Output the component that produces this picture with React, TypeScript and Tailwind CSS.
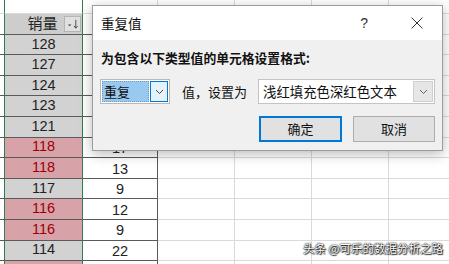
import React from "react";

const GREEN = "border-r-[#2f7d50]";

type R = { a: string; b: string; dup: boolean };
const rows: R[] = [
  { a: "128", b: "", dup: false },
  { a: "127", b: "", dup: false },
  { a: "124", b: "", dup: false },
  { a: "123", b: "", dup: false },
  { a: "121", b: "", dup: false },
  { a: "118", b: "17", dup: true },
  { a: "118", b: "13", dup: true },
  { a: "117", b: "9", dup: false },
  { a: "116", b: "12", dup: true },
  { a: "116", b: "9", dup: true },
  { a: "114", b: "22", dup: false },
  { a: "", b: "", dup: true },
];

function FilterIcon() {
  return (
    <svg width="16" height="16" viewBox="0 0 16 16">
      <path d="M3 8.5 L7 8.5 L5 10.5 Z" fill="#444" />
      <path d="M11.5 3.5 V12" stroke="#444" strokeWidth="1" />
      <path d="M9.5 10 L11.5 12.5 L13.5 10" stroke="#444" strokeWidth="1" fill="none" />
    </svg>
  );
}

function Chevron({ color = "#444" }: { color?: string }) {
  return (
    <svg width="9" height="6" viewBox="0 0 9 6">
      <path d="M1 1 L4.5 4.5 L8 1" stroke={color} strokeWidth="1" fill="none" />
    </svg>
  );
}

function Row({
  h,
  a,
  b,
  aBg,
  aText,
  header,
  dark,
}: {
  h: string;
  a?: React.ReactNode;
  b?: string;
  aBg: string;
  aText: string;
  header?: boolean;
  dark: boolean;
}) {
  const hb = dark ? "border-b-[#5a5a5a]" : "border-b-[#d9d9d9]";
  return (
    <div className={`flex ${h}`}>
      <div className={`w-[5px] shrink-0 border-r border-b ${GREEN} ${hb}`} />
      <div
        className={`relative w-[78px] shrink-0 border-r border-b ${GREEN} ${hb} ${aBg} ${aText} flex items-center justify-center`}
      >
        {a}
        {header && (
          <div className="absolute right-[1px] top-[2px] w-[17px] h-[16px] bg-[#e0e0e0] border border-[#b4b4b4] flex items-center justify-center">
            <FilterIcon />
          </div>
        )}
      </div>
      <div
        className={`w-[75px] shrink-0 border-r border-b ${dark ? "border-r-[#5a5a5a]" : "border-r-[#d9d9d9]"} ${hb} bg-white text-[#222] flex items-center justify-center pt-[3px]`}
      >
        {b}
      </div>
      <div className="w-[77px] shrink-0 border-r border-b border-[#dadada] bg-white" />
      <div className="w-[77px] shrink-0 border-r border-b border-[#dadada] bg-white" />
      <div className="w-[77px] shrink-0 border-r border-b border-[#dadada] bg-white" />
      <div className="flex-1 border-b border-[#dadada] bg-white" />
    </div>
  );
}

export default function App() {
  return (
    <div
      className="relative w-[449px] h-[264px] overflow-hidden bg-white text-[14.5px]"
      style={{ fontFamily: '"Liberation Sans", "Noto Sans CJK SC", sans-serif' }}
    >
      <div className="flex flex-col">
        <Row h="h-[14px]" aBg="bg-white" aText="" dark={false} />
        <Row
          h="h-[20.6px]"
          a={<span className="text-[15px] pr-[2px]">销量</span>}
          aBg="bg-[#cdcdcd]"
          aText="text-[#222]"
          header
          dark
        />
        {rows.map((r, i) => (
          <Row
            key={i}
            h="h-[20.6px]"
            a={r.a}
            b={r.b}
            aBg={r.dup ? "bg-[#d7a3a8]" : "bg-[#d2d2d2]"}
            aText={r.dup ? "text-[#9c0006]" : "text-[#222]"}
            dark
          />
        ))}
      </div>

      {/* Dialog */}
      <div
        className="absolute left-[92px] top-[5px] w-[351px] h-[146px] border border-[#9c9c9c] bg-[#f0f0f0] shadow-[0_3px_12px_rgba(0,0,0,0.28)] flex flex-col text-[13px] text-[#111]"
        style={{ fontFamily: '"Noto Sans CJK SC", "Liberation Sans", sans-serif' }}
      >
        <div className="h-[34px] bg-white flex items-center pl-[8px] pr-[19px]">
          <span className="flex-1 text-[13.5px]">重复值</span>
          <span className="text-[14px] text-[#333] mr-[43px]" style={{ fontFamily: '"Liberation Sans", sans-serif' }}>
            ?
          </span>
          <svg width="12" height="12" viewBox="0 0 12 12">
            <path d="M0.5 0.5 L11.5 11.5 M11.5 0.5 L0.5 11.5" stroke="#333" strokeWidth="1" />
          </svg>
        </div>
        <div className="flex-1 flex flex-col pl-[7px] pr-[6px]">
          <div className="mt-[8px] ml-[1px] h-[20px] leading-[20px] font-bold text-[12.8px]">
            为包含以下类型值的单元格设置格式:
          </div>
          <div className="mt-[11px] flex items-center h-[25px]">
            <div className="w-[70px] h-[25px] border border-[#b9b9b9] bg-white flex items-stretch p-[1px]">
              <div className="w-[47px] bg-[#99c9ef] border border-dotted border-[#6f9fc8] flex items-center pl-[1px] text-[13px]">
                重复
              </div>
              <div className="ml-[1px] flex-1 bg-[#e5f1fb] border border-[#0078d7] flex items-center justify-center">
                <Chevron />
              </div>
            </div>
            <div className="w-[88px] pl-[12px] text-[13px]">值，设置为</div>
            <div className="w-[177px] h-[25px] border border-[#c4c4c4] bg-white flex items-stretch p-[1px]">
              <div className="flex-1 flex items-center pl-[3px] text-[13.4px]">浅红填充色深红色文本</div>
              <div className="w-[20px] bg-[#e6e6e6] border border-[#cfcfcf] flex items-center justify-center">
                <Chevron color="#666" />
              </div>
            </div>
          </div>
          <div className="mt-[12px] flex justify-end gap-[11px] pr-[1px]">
            <div className="w-[83px] h-[26px] border-2 border-[#0078d7] bg-[#e1e1e1] flex items-center justify-center text-[13px]">
              确定
            </div>
            <div className="w-[82px] h-[26px] border border-[#adadad] bg-[#e1e1e1] flex items-center justify-center text-[13px]">
              取消
            </div>
          </div>
        </div>
      </div>

      {/* Watermark */}
      <div
        className="absolute left-[303px] top-[240px] text-[11.5px] text-white leading-[16px] [text-shadow:0_0_1px_#000,0_0_2px_#000,1px_1px_1px_#333]"
        style={{ fontFamily: '"Noto Sans CJK SC", sans-serif' }}
      >
        头条 @可乐的数据分析之路
      </div>
    </div>
  );
}
